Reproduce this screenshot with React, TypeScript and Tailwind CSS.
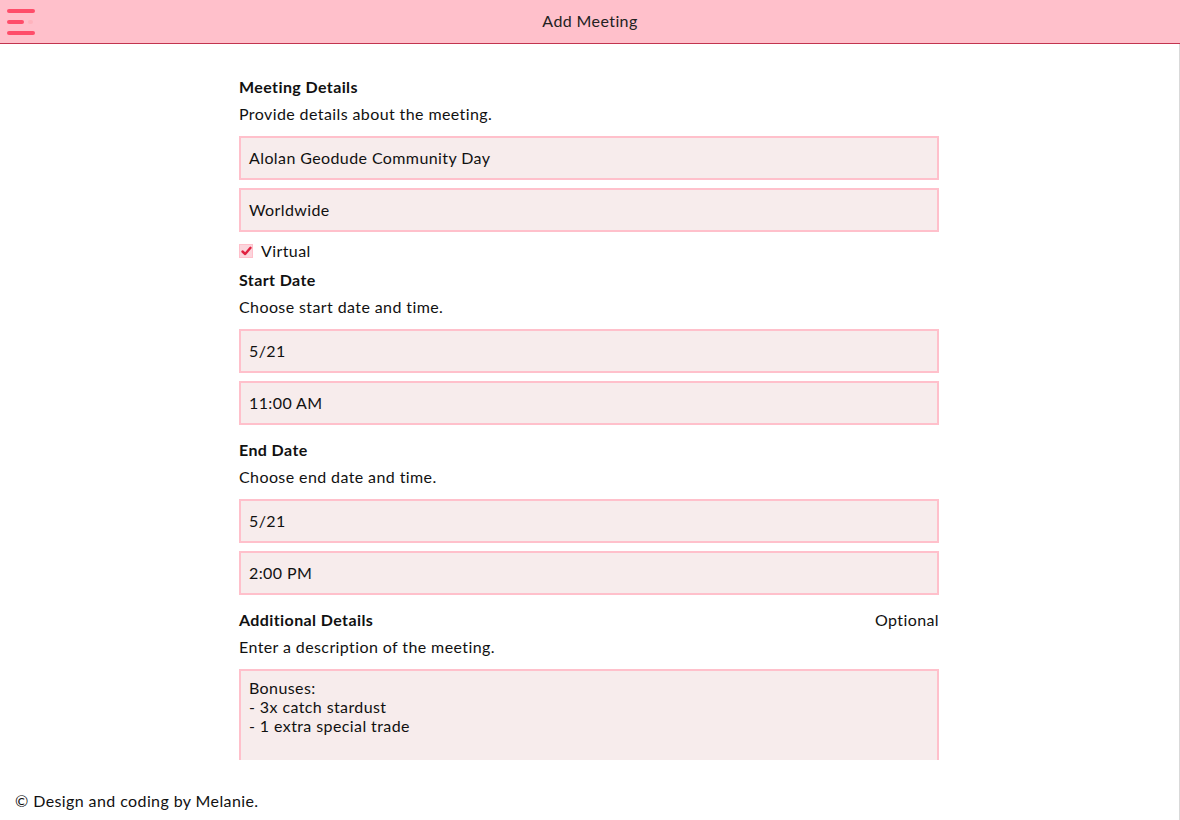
import React from "react";

const font = { fontFamily: "Lato, 'Open Sans', sans-serif" };

function Field({ value, className = "" }: { value: string; className?: string }) {
  return (
    <div
      className={`h-[44px] w-full border-2 border-[#ffc0cb] bg-[#f7ecec] px-[8px] flex items-center text-[16px] text-[#111] ${className}`}
    >
      {value}
    </div>
  );
}

function Heading({ children, right }: { children: React.ReactNode; right?: string }) {
  return (
    <div className="flex justify-between h-[24px] items-center text-[16px] leading-[24px]">
      <span className="font-bold text-[#111]">{children}</span>
      {right && <span className="text-[#111]">{right}</span>}
    </div>
  );
}

function Desc({ children }: { children: React.ReactNode }) {
  return <div className="mt-[3px] h-[24px] leading-[24px] text-[16px] text-[#111]">{children}</div>;
}

export default function App() {
  return (
    <div className="w-[1180px] h-[820px] bg-white overflow-hidden flex flex-col tracking-[0.4px]" style={font}>
      <header className="h-[44px] shrink-0 bg-[#ffc0cb] border-b border-[#c2344f] relative flex items-center justify-center">
        <div className="absolute left-[7px] top-[9px] flex flex-col gap-[7px]">
          <div className="w-[28px] h-[4px] rounded-full bg-[#ff4d6a]" />
          <div className="flex items-center gap-[4px]">
            <div className="w-[17px] h-[4px] rounded-full bg-[#ff4d6a]" />
            <div className="w-[5px] h-[4px] rounded-full bg-[#ffb3bd]" />
          </div>
          <div className="w-[28px] h-[4px] rounded-full bg-[#ff4d6a]" />
        </div>
        <span className="text-[16px] text-[#222] -mt-[2px]">Add Meeting</span>
      </header>
      <div className="h-[716px] shrink-0 overflow-hidden border-r border-[#d9d9d9]">
        <div className="w-[700px] ml-[239px] pt-[31px]">
          <Heading>Meeting Details</Heading>
          <Desc>Provide details about the meeting.</Desc>
          <Field className="mt-[10px]" value="Alolan Geodude Community Day" />
          <Field className="mt-[8px]" value="Worldwide" />
          <div className="mt-[7px] h-[24px] flex items-center gap-[8px] text-[16px] text-[#111]">
            <span className="w-[14px] h-[14px] border border-[#ffc0cb] bg-[#fbd5dc] flex items-center justify-center">
              <svg width="11" height="10" viewBox="0 0 11 10">
                <path d="M1.5 5.5 L4.2 8 L9.5 1.8" stroke="#e0203f" strokeWidth="2.4" fill="none" strokeLinecap="round" strokeLinejoin="round" />
              </svg>
            </span>
            <span>Virtual</span>
          </div>
          <div className="mt-[5px]">
            <Heading>Start Date</Heading>
          </div>
          <Desc>Choose start date and time.</Desc>
          <Field className="mt-[10px]" value="5/21" />
          <Field className="mt-[8px]" value="11:00 AM" />
          <div className="mt-[13px]">
            <Heading>End Date</Heading>
          </div>
          <Desc>Choose end date and time.</Desc>
          <Field className="mt-[10px]" value="5/21" />
          <Field className="mt-[8px]" value="2:00 PM" />
          <div className="mt-[13px]">
            <Heading right="Optional">Additional Details</Heading>
          </div>
          <Desc>Enter a description of the meeting.</Desc>
          <div className="mt-[10px] h-[150px] w-full border-2 border-[#ffc0cb] bg-[#f7ecec] px-[8px] pt-[7px] text-[16px] leading-[19px] text-[#111] whitespace-pre">
            {"Bonuses:\n- 3x catch stardust\n- 1 extra special trade"}
          </div>
        </div>
      </div>
      <footer className="flex-1 border-r border-[#d9d9d9] pl-[15px] pt-[29px] text-[16px] leading-[24px] text-[#111]">
        © Design and coding by Melanie.
      </footer>
    </div>
  );
}
